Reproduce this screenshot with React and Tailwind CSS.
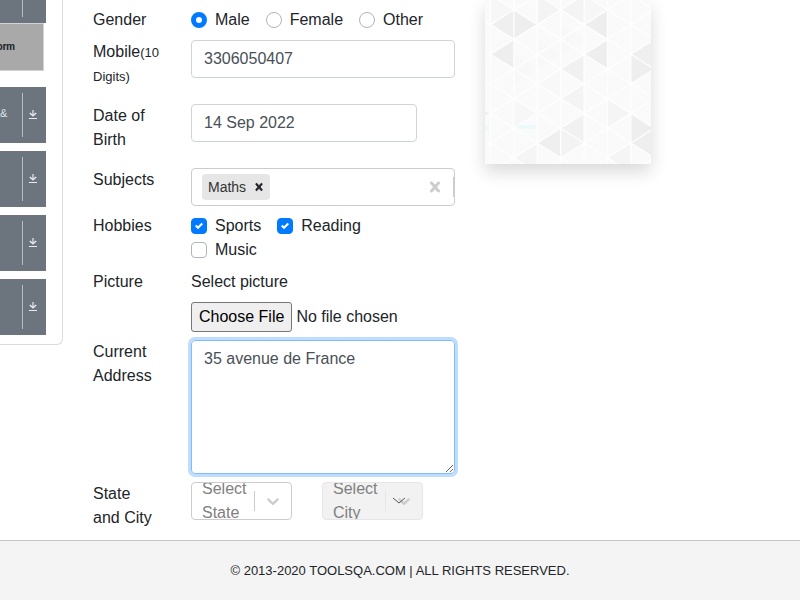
import React from "react";

const CHEVRON =
  "M4.516 7.548c0.436-0.446 1.043-0.481 1.576 0l3.908 3.747 3.908-3.747c0.533-0.481 1.141-0.446 1.574 0 0.436 0.445 0.408 1.197 0 1.615-0.406 0.418-4.695 4.502-4.695 4.502-0.217 0.223-0.502 0.335-0.787 0.335s-0.57-0.112-0.789-0.335c0 0-4.287-4.084-4.695-4.502s-0.436-1.17 0-1.615z";
const CROSS =
  "M14.348 14.849c-0.469 0.469-1.229 0.469-1.697 0l-2.651-3.030-2.651 3.029c-0.469 0.469-1.229 0.469-1.697 0-0.469-0.469-0.469-1.229 0-1.697l2.758-3.15-2.759-3.152c-0.469-0.469-0.469-1.228 0-1.697s1.228-0.469 1.697 0l2.652 3.031 2.651-3.031c0.469-0.469 1.228-0.469 1.697 0s0.469 1.229 0 1.697l-2.758 3.152 2.758 3.15c0.469 0.469 0.469 1.229 0 1.698z";

function DownloadIcon() {
  return (
    <svg width="8" height="9" viewBox="0 0 8 9" fill="none" stroke="#e9ebed" aria-hidden="true">
      <path d="M4 0v5" strokeWidth="2" opacity="0.6" />
      <path d="M0.8 3l3.2 2.8L7.2 3" strokeWidth="1.4" />
      <path d="M0 8.5h8" strokeWidth="1" />
    </svg>
  );
}

function MenuGroup({ title = "" }) {
  return (
    <button type="button" className="flex h-14 w-full items-center justify-end bg-[#6c757d] text-[11px] text-[#dee2e6]">
      <span className="mb-1 flex-1 overflow-hidden pr-[17px] text-right whitespace-nowrap">{title}</span>
      <span className="flex h-11 w-6 items-center justify-center border-l border-[#b9bdc1] pr-[3px] pb-0.5">
        <DownloadIcon />
      </span>
    </button>
  );
}

function Sidebar() {
  return (
    <aside className="flex h-[345px] w-[63px] shrink-0 flex-col justify-end overflow-hidden rounded-br-md border-r border-b border-[#dcdcdc] pr-4 pb-[9px]">
      <div className="shrink-0">
        <MenuGroup />
      </div>
      <a href="#form" className="mr-0.5 mb-4 flex h-12 shrink-0 items-center justify-end overflow-hidden border border-l-0 border-[#ced4da] bg-[#a9a9a9] pr-7 pb-0.5 font-['Roboto',sans-serif] text-[10px] font-bold text-[#212529]">
        orm
      </a>
      <div className="flex shrink-0 flex-col gap-2">
        <MenuGroup title="&" />
        <MenuGroup />
        <MenuGroup />
        <MenuGroup />
      </div>
    </aside>
  );
}

function Row({ label, htmlFor, children, className = "" }) {
  return (
    <div className={"flex items-start " + className}>
      {htmlFor ? (
        <label htmlFor={htmlFor} className="w-[98px] shrink-0 pr-[30px]">{label}</label>
      ) : (
        <div className="w-[98px] shrink-0 pr-[30px]">{label}</div>
      )}
      <div className="min-w-0 flex-1">{children}</div>
    </div>
  );
}

function Radio({ label, checked }) {
  return (
    <label className="flex items-center gap-2">
      <input
        type="radio"
        name="gender"
        defaultChecked={checked}
        className="size-4 appearance-none rounded-full border border-[#adb5bd] bg-white checked:border-[5px] checked:border-[#007bff]"
      />
      {label}
    </label>
  );
}

function Check({ label, checked }) {
  return (
    <label className="mr-4 flex items-center gap-2">
      <span className="relative flex size-4">
        <input
          type="checkbox"
          defaultChecked={checked}
          className="peer size-4 appearance-none rounded border border-[#adb5bd] bg-white checked:border-[#007bff] checked:bg-[#007bff]"
        />
        <svg viewBox="0 0 8 8" className="pointer-events-none absolute top-1 left-1 hidden size-2 peer-checked:block" aria-hidden="true">
          <path fill="#fff" d="M6.564.75l-3.59 3.612-1.538-1.55L0 4.26l2.974 2.99L8 2.193z" />
        </svg>
      </span>
      {label}
    </label>
  );
}

function Dropdown({ name, disabled }) {
  return (
    <div
      className={
        "relative flex h-[38px] w-[101px] items-center overflow-hidden rounded border " +
        (disabled ? "border-[#e6e6e6] bg-[#f2f2f2]" : "border-[#cccccc] bg-white")
      }
    >
      <span className="flex-1 pl-2.5 text-[#808080]" aria-hidden="true">
        Select {name}
      </span>
      <span className={"h-5 w-px " + (disabled ? "bg-[#e6e6e6]" : "bg-[#cccccc]")} />
      <span className="relative p-2">
        <svg width="20" height="20" viewBox="0 0 20 20" fill="#cccccc" aria-hidden="true">
          <path d={CHEVRON} />
        </svg>
        {disabled && (
          <svg width="14" height="8" viewBox="0 0 14 8" className="absolute top-3.5 left-1.5" fill="none" stroke="#555" aria-hidden="true">
            <path d="M1 1l6 5 6-5" />
          </svg>
        )}
      </span>
      <select aria-label={name} disabled={disabled} className="absolute inset-0 size-full opacity-0">
        <option>Select {name}</option>
      </select>
    </div>
  );
}

const COL = 23.4;
const HALF = 14.8;
// Column and row of each shaded triangle: [column, row, side, colour].
const SHADES = [
  [0, 1, "l", "#efefef"], [1, 1, "r", "#eeeeee"], [0, 3, "l", "#eeeeee"],
  [4, 1, "l", "#eeeeee"], [4, 3, "l", "#eeeeee"], [3, 4, "l", "#f1f1f1"],
  [3, 6, "l", "#f4f4f4"], [6, 3, "l", "#efefef"], [6, 4, "r", "#eeeeee"],
  [3, 8, "l", "#f1f1f1"], [2, 9, "l", "#efefef"], [3, 9, "r", "#f3f3f3"],
  [6, 8, "r", "#eeeeee"], [6, 9, "l", "#eeeeee"], [3, 0, "l", "#f4f4f4"],
  [2, 0, "r", "#f4f4f4"], [4, 0, "r", "#f7f7f7"], [5, 7, "r", "#f5f5f5"],
  [1, 10, "l", "#f5f5f5"], [5, 10, "l", "#f5f5f5"], [2, 5, "l", "#f8f8f8"],
  [1, 7, "r", "#f7f7f7"], [2, 3, "r", "#f8f8f8"], [0, 0, "r", "#f7f7f7"],
  [3, 2, "r", "#f8f8f8"], [1, 4, "r", "#f8f8f8"], [-1, 7, "r", "#f0f0f0"],
];

function Banner() {
  const lines = [];
  for (let c = -1; c < 8; c++) {
    const x = 5.5 + c * COL;
    lines.push(`M${x} 0V164`);
    for (let r = -2; r < 13; r++) {
      if ((r + c) % 2 === 0) continue;
      const y = 9.8 + r * HALF;
      lines.push(`M${x} ${y}l${COL} ${HALF}M${x} ${y}l${COL} ${-HALF}`);
    }
  }
  return (
    <svg viewBox="0 0 166 164" className="block h-[164px] w-[166px] bg-[#fafafa] shadow-[0_8px_16px_rgba(0,0,0,0.15)]" aria-hidden="true">
      {SHADES.map(([c, r, side, fill]) => {
        const x = 5.5 + c * COL;
        const y = 9.8 + r * HALF;
        const d =
          side === "l"
            ? `M${x} ${y}l${COL} ${-HALF}v${2 * HALF}z`
            : `M${x} ${y - HALF}v${2 * HALF}l${COL} ${-HALF}z`;
        return <path key={c + "," + r + side} d={d} fill={fill} />;
      })}
      <path d={lines.join("")} stroke="#fefefe" strokeWidth="1.3" fill="none" />
      <path d="M0 128h4M33 127h18" stroke="#e8fafa" strokeWidth="3" />
    </svg>
  );
}

const FIELD = "block h-[38px] w-full rounded border border-[#ced4da] bg-white px-3 text-[#495057]";

export default function App() {
  return (
    <div className="flex min-h-screen flex-col overflow-hidden bg-white font-['Liberation_Sans',Arial,sans-serif] text-base text-[#212529]">
      <div className="flex flex-1 items-start">
        <Sidebar />
        <form id="form" className="ml-[30px] flex w-[362px] flex-col gap-2 pt-2 pb-2.5">
          <Row label="Gender">
            <div className="flex gap-4">
              <Radio label="Male" checked />
              <Radio label="Female" />
              <Radio label="Other" />
            </div>
          </Row>
          <Row label={<>Mobile<small className="text-[13px] leading-4">(10 Digits)</small></>} htmlFor="mobile">
            <input id="mobile" type="text" defaultValue="3306050407" className={FIELD} />
          </Row>
          <Row label="Date of Birth" htmlFor="birth" className="mt-2">
            <div className="pr-[38px]">
              <input id="birth" type="text" defaultValue="14 Sep 2022" className={FIELD} />
            </div>
          </Row>
          <Row label="Subjects" htmlFor="subjects" className="mt-2">
            <div className="flex h-[38px] items-center overflow-hidden rounded border border-[#cccccc] pl-2.5">
              <span className="flex h-[26px] shrink-0 items-center rounded-sm bg-[#e6e6e6] pl-1.5 text-[14px] text-[#333333]">
                Maths
                <button type="button" aria-label="Remove Maths" className="ml-0.5 px-1">
                  <svg width="14" height="14" viewBox="0 0 20 20" fill="#212529" stroke="#212529"><path d={CROSS} /></svg>
                </button>
              </span>
              <input id="subjects" type="text" className="min-w-0 flex-1 outline-none" />
              <button type="button" aria-label="Clear subjects" className="shrink-0 p-2">
                <svg width="20" height="20" viewBox="0 0 20 20" fill="#cccccc" stroke="#cccccc" strokeWidth="0.8"><path d={CROSS} /></svg>
              </button>
              <span className="h-5 w-px shrink-0 bg-[#cccccc]" />
            </div>
          </Row>
          <Row label="Hobbies">
            <div className="flex flex-wrap">
              <Check label="Sports" checked />
              <Check label="Reading" checked />
              <Check label="Music" />
            </div>
          </Row>
          <Row label="Picture">
            <label htmlFor="picture" className="mb-2 block">Select picture</label>
            <input
              id="picture"
              type="file"
              className="block h-[30px] w-full file:mr-1 file:h-[30px] file:rounded-[3px] file:border file:border-solid file:border-[#767676] file:bg-[#efefef] file:px-[7px] file:text-black"
            />
          </Row>
          <Row label="Current Address" htmlFor="address">
            <textarea
              id="address"
              defaultValue="35 avenue de France"
              className="block h-[134px] w-full resize rounded border border-[#80bdff] px-3 py-1.5 text-[#495057] ring-[3px] ring-[#bfdeff] outline-none"
            />
          </Row>
          <Row label="State and City">
            <div className="flex gap-[30px]">
              <Dropdown name="State" />
              <Dropdown name="City" disabled />
            </div>
          </Row>
        </form>
        <div className="ml-[30px]">
          <Banner />
        </div>
      </div>
      <footer className="flex h-[60px] items-center justify-center border-t border-[#c8c8c8] bg-[#f4f4f4] text-[13px]">
        © 2013-2020 TOOLSQA.COM | ALL RIGHTS RESERVED.
      </footer>
    </div>
  );
}
